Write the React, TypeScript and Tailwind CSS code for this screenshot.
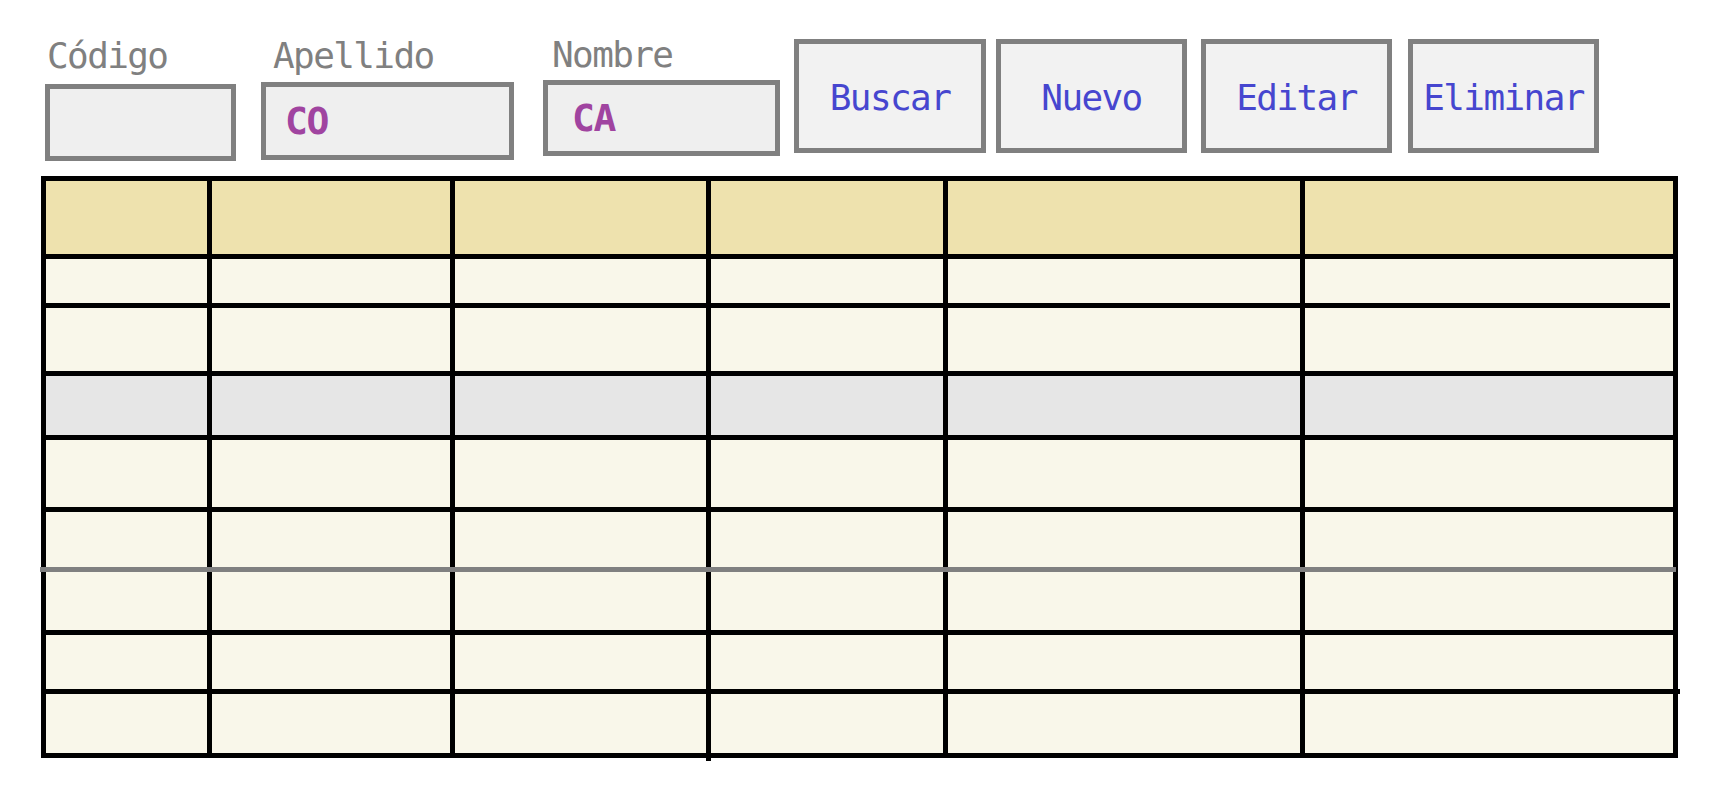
import React from 'react';

const font = { fontFamily: '"DejaVu Sans Mono", "Liberation Mono", monospace' };

// row backgrounds: header, data rows, one grey (selected) row
const rowColors = [
  'bg-[#eee2ae]',
  'bg-[#f9f7ea]',
  'bg-[#f9f7ea]',
  'bg-[#e6e6e6]',
  'bg-[#f9f7ea]',
  'bg-[#f9f7ea]',
  'bg-[#f9f7ea]',
  'bg-[#f9f7ea]',
];

function Field({
  label,
  value,
  className,
  labelClass,
  boxClass,
}: {
  label: string;
  value?: string;
  className?: string;
  labelClass?: string;
  boxClass: string;
}) {
  return (
    <div className={`flex flex-col ${className ?? ''}`}>
      <span className={`block h-[34px] text-[36px] leading-none tracking-[-1.6px] text-[#808080] ${labelClass ?? ''}`}>
        {label}
      </span>
      <div
        className={`flex items-center border-[5px] border-[#808080] bg-[#efefef] ${boxClass}`}
      >
        {value && (
          <span className="text-[38px] font-bold leading-none tracking-[-1.5px] text-[#a044a0]">{value}</span>
        )}
      </div>
    </div>
  );
}

function ActionButton({ text, className }: { text: string; className?: string }) {
  return (
    <button
      className={`flex h-[114px] w-[191px] items-center justify-center border-[5px] border-[#808080] bg-[#f2f2f2] pt-[3px] text-[36px] leading-none tracking-[-1.6px] text-[#4646cf] ${className ?? ''}`}
    >
      {text}
    </button>
  );
}

export default function App() {
  return (
    <div className="h-[804px] w-[1715px] overflow-hidden bg-white" style={font}>
      {/* Search bar */}
      <div className="flex h-[176px] items-start pl-[45px]">
        <Field label="Código" className="mt-[38px]" labelClass="ml-[2px]" boxClass="mt-[12px] h-[77px] w-[191px]" />
        <Field
          label="Apellido"
          value="CO"
          className="ml-[25px] mt-[38px]"
          labelClass="ml-[12px]"
          boxClass="mt-[10px] h-[78px] w-[253px] pl-[19px]"
        />
        <Field
          label="Nombre"
          value="CA"
          className="ml-[29px] mt-[37px]"
          labelClass="ml-[9px]"
          boxClass="mt-[9px] h-[76px] w-[237px] pl-[24px]"
        />
        <ActionButton text="Buscar" className="ml-[14px] mt-[39px] w-[192px]" />
        <ActionButton text="Nuevo" className="ml-[10px] mt-[39px] h-[113px]" />
        <ActionButton text="Editar" className="ml-[14px] mt-[39px] h-[113px]" />
        <ActionButton text="Eliminar" className="ml-[16px] mt-[39px]" />
      </div>

      {/* Results grid */}
      <div className="relative ml-[41px] w-fit">
        <div className="grid grid-cols-[161px_238px_251px_232px_352px_368px] grid-rows-[73px_44px_63px_59px_67px_118px_54px_59px] gap-[5px] bg-black p-[5px]">
          {rowColors.map((bg, r) =>
            [0, 1, 2, 3, 4, 5].map((c) => <div key={`${r}-${c}`} className={bg} />),
          )}
        </div>
        {/* grey separator drawn across row 6 */}
        <div className="absolute left-[-1px] top-[391px] h-[5px] w-[1636px] bg-[#808080]" />
        {/* small sketch leftovers */}
        <div className="absolute left-[1629px] top-[127px] h-[5px] w-[3px] bg-[#f9f7ea]" />
        <div className="absolute left-[1637px] top-[513px] h-[5px] w-[2px] bg-black" />
        <div className="absolute left-[665px] top-[582px] h-[3px] w-[5px] bg-black" />
      </div>
    </div>
  );
}
